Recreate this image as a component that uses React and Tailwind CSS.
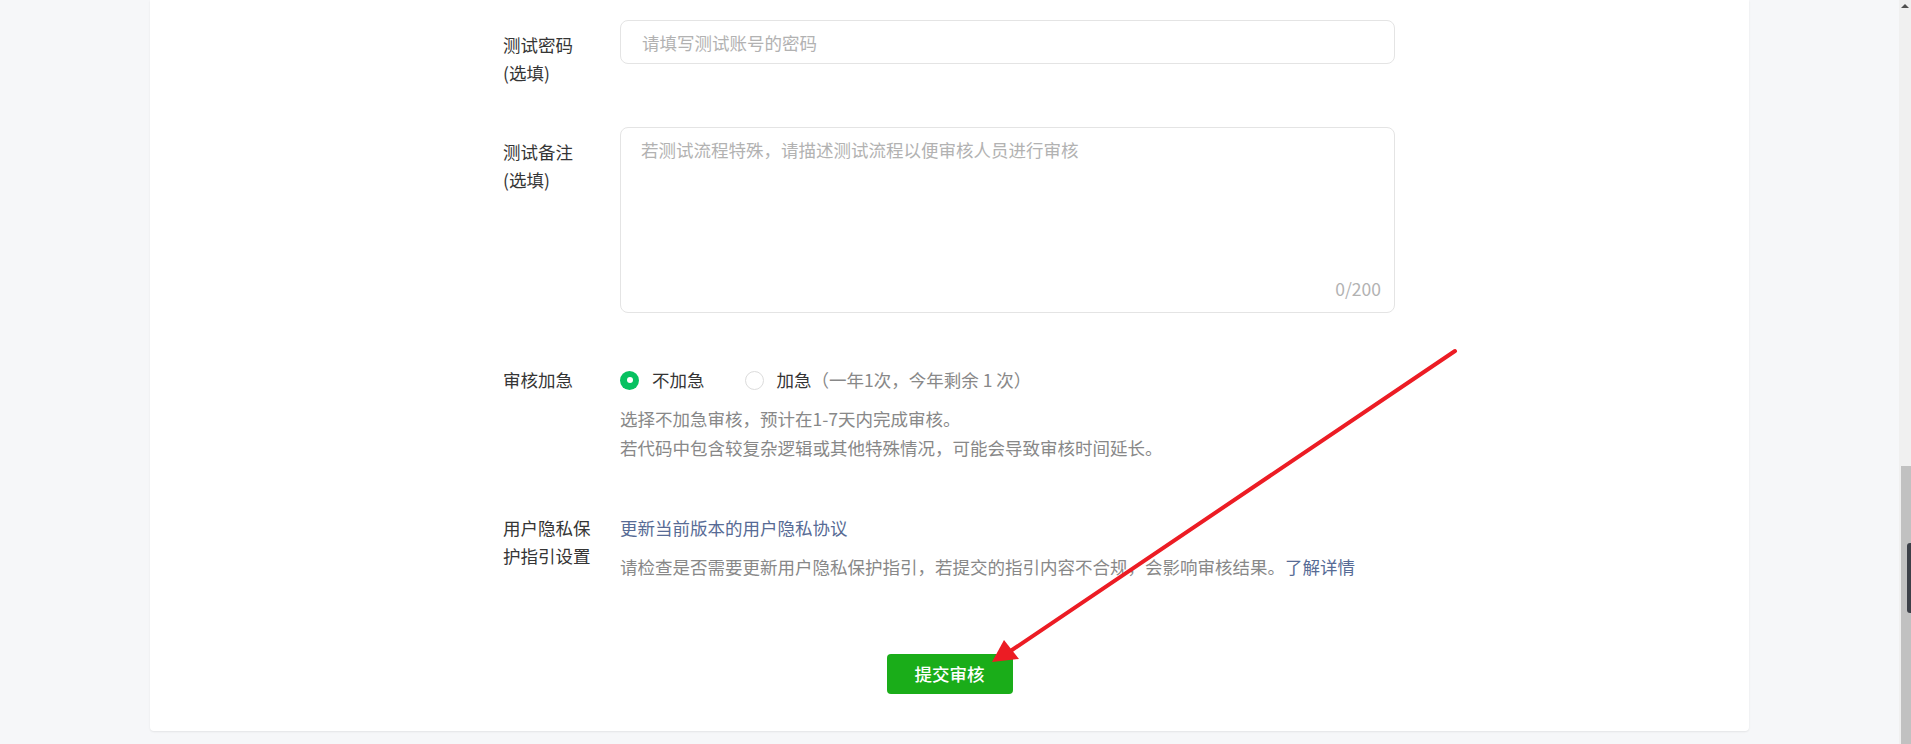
import React, { useState } from 'react'

const FormRow = ({ label, labelPad = 'pt-[11px]', className = '', children }) => {
  return (
    <div className={`flex ${className}`}>
      <div className={`w-[96px] mr-[21px] shrink-0 text-[#353535] leading-[28px] ${labelPad}`}>
        {label}
      </div>
      <div className="w-[775px]">{children}</div>
    </div>
  );
};

const Radio = ({ checked, onClick, children }) => {
  return (
    <label className="flex items-center cursor-pointer" onClick={onClick}>
      {checked ? (
        <span className="w-[19px] h-[19px] rounded-full bg-[#07c160] flex items-center justify-center">
          <span className="w-[6px] h-[6px] rounded-full bg-white"></span>
        </span>
      ) : (
        <span className="w-[19px] h-[19px] rounded-full border border-[#dcdcdc] bg-white"></span>
      )}
      <span className="ml-[13px]">{children}</span>
    </label>
  );
};

const App = () => {
  const [urgent, setUrgent] = useState(false);
  const [note, setNote] = useState('');

  return (
    <div className="min-h-screen bg-[#f6f7f9] flex font-['Noto_Sans_CJK_SC',sans-serif] text-[17.5px]">
      <div className="flex-1 px-[150px] pb-[13px]">
        <div className="bg-white rounded-b-[4px] shadow-[0_1px_2px_rgba(0,0,0,0.08)] pl-[353px] pt-[20px] pb-[37px]">
          <FormRow label={<>测试密码<br />(选填)</>} className="mb-[40px]">
            <input
              type="password"
              placeholder="请填写测试账号的密码"
              className="w-full h-[44px] px-[21px] border border-[#e4e4e4] rounded-[8px] outline-none placeholder:text-[#b2b2b2]"
            />
          </FormRow>

          <FormRow label={<>测试备注<br />(选填)</>} className="mb-[53px]">
            <div className="relative">
              <textarea
                value={note}
                onChange={(e) => setNote(e.target.value.slice(0, 200))}
                placeholder="若测试流程特殊，请描述测试流程以便审核人员进行审核"
                className="block w-full h-[186px] px-[20px] pt-[8px] border border-[#e4e4e4] rounded-[8px] outline-none resize-none leading-[28px] placeholder:text-[#b2b2b2]"
              />
              <span className="absolute right-[14px] bottom-[10px] text-[#b2b2b2] leading-[28px]">
                {note.length}/200
              </span>
            </div>
          </FormRow>

          <FormRow label="审核加急" labelPad="pt-0" className="mb-[52px]">
            <div className="flex items-center h-[28px] text-[#353535] leading-[28px]">
              <Radio checked={!urgent} onClick={() => setUrgent(false)}>不加急</Radio>
              <div className="ml-[40px]">
                <Radio checked={urgent} onClick={() => setUrgent(true)}>
                  加急<span className="text-[#888]">（一年1次，今年剩余 1 次）</span>
                </Radio>
              </div>
            </div>
            <p className="mt-[10px] text-[#888] leading-[29px]">
              选择不加急审核，预计在1-7天内完成审核。<br />
              若代码中包含较复杂逻辑或其他特殊情况，可能会导致审核时间延长。
            </p>
          </FormRow>

          <FormRow label="用户隐私保护指引设置" labelPad="pt-0">
            <a href="#" className="block text-[#576b95] leading-[28px]">更新当前版本的用户隐私协议</a>
            <p className="mt-[10px] text-[#888] leading-[29px]">
              请检查是否需要更新用户隐私保护指引，若提交的指引内容不合规，会影响审核结果。
              <a href="#" className="text-[#576b95]">了解详情</a>
            </p>
          </FormRow>

          <div className="flex justify-center mt-[73px] -ml-[353px]">
            <button className="w-[126px] h-[40px] rounded-[4px] bg-[#1aad19] text-white font-medium">
              提交审核
            </button>
          </div>
        </div>
      </div>

      {/* scrollbar */}
      <div className="w-[12px] shrink-0 bg-[#f0f0f0] flex flex-col">
        <div className="h-[466px] flex justify-center pt-[4px]">
          <div className="w-0 h-0 border-l-[4px] border-r-[4px] border-b-[4px] border-l-transparent border-r-transparent border-b-[#505050]"></div>
        </div>
        <div className="flex-1 ml-[2px] bg-[#c1c1c1] relative">
          <div className="absolute right-0 top-[77px] w-[4px] h-[70px] rounded-l-[3px] bg-[#3c4048]"></div>
        </div>
      </div>

      {/* annotation arrow */}
      <svg className="absolute left-0 top-0 pointer-events-none" width="1911" height="744">
        <line x1="1455" y1="351" x2="1012" y2="650" stroke="#ec1c24" strokeWidth="4" strokeLinecap="round" />
        <polygon points="992,662 1004,640 1019,659" fill="#ec1c24" />
      </svg>
    </div>
  );
};

export default App;
